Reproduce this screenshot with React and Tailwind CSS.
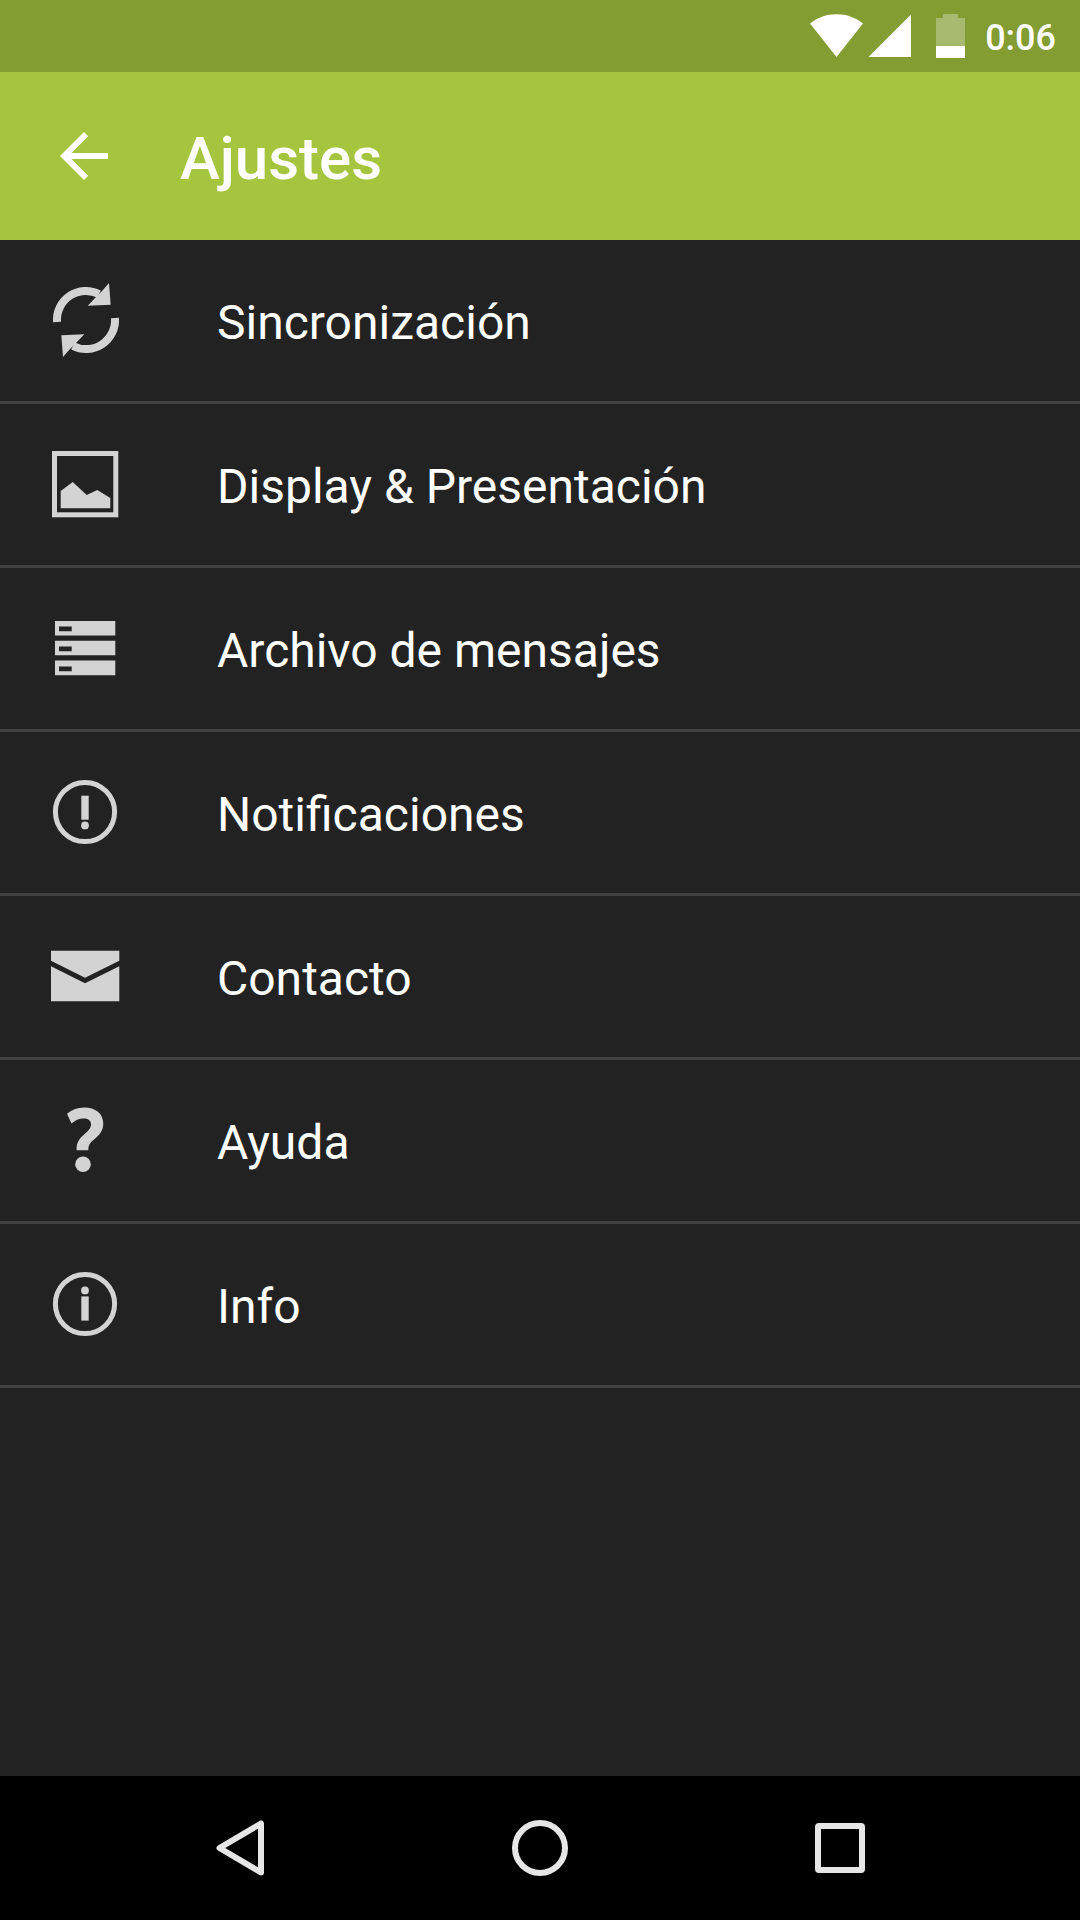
const SyncIcon = () => (
  <>
    <path d="M12 42A29 29 0 0 1 54 14" fill="none" stroke="currentColor" strokeWidth="8" />
    <path d="M64 3L65.7 24.7L42.7 25.7L51 17L57 11Z" />
    <g transform="rotate(180 41 40)">
      <path d="M12 42A29 29 0 0 1 54 14" fill="none" stroke="currentColor" strokeWidth="8" />
      <path d="M64 3L65.7 24.7L42.7 25.7L51 17L57 11Z" />
    </g>
  </>
);

const PictureIcon = () => (
  <>
    <rect x="9.5" y="9.5" width="61.3" height="61.3" fill="none" stroke="currentColor" strokeWidth="5" />
    <path d="M15.7 47L27.7 38L41.7 51L52.3 46L65.3 54V64.3H15.7Z" />
  </>
);

const ArchiveIcon = () => (
  <path
    fillRule="evenodd"
    d="M10 13H70.3V27.5H10ZM14 18.5H26.7V23.3H14Z M10 32.7H70.3V47.3H10ZM14 38.5H26.7V43.3H14Z M10 52.5H70.3V67.3H10ZM14 58.5H26.7V63.3H14Z"
  />
);

const AlertIcon = () => (
  <>
    <circle cx="40" cy="40" r="29.6" fill="none" stroke="currentColor" strokeWidth="5" />
    <rect x="36.3" y="23.7" width="7.4" height="24" />
    <circle cx="40" cy="53.4" r="3.9" />
  </>
);

const MailIcon = () => (
  <path d="M6 14.7H74.3V24.7L40 41.7L6 24.7ZM6 30.2L40 47.2L74.3 30.2V65.3H6Z" />
);

const HelpIcon = () => (
  <>
    <path d="M22 13.7C27 9.5 33 7.5 39 7.5C50.5 7.5 58.3 13.5 58.3 23.8C58.3 31 54 35.5 49 39.5C45 42.7 43.3 45 43.3 50.3H31.7C31.2 44 33 40 38.5 35C43 31 46 28.5 46 24.3C46 20.5 43 18.6 38.5 18.6C34 18.6 30 20.6 26.5 23.5Z" />
    <circle cx="38" cy="64.3" r="7.8" />
  </>
);

const InfoIcon = () => (
  <>
    <circle cx="40" cy="40" r="29.6" fill="none" stroke="currentColor" strokeWidth="5" />
    <circle cx="40" cy="26.4" r="3.9" />
    <rect x="36.3" y="32.4" width="7.4" height="24.2" />
  </>
);

const items = [
  { id: 'sync', label: 'Sincronización', Icon: SyncIcon },
  { id: 'display', label: 'Display & Presentación', Icon: PictureIcon },
  { id: 'archive', label: 'Archivo de mensajes', Icon: ArchiveIcon },
  { id: 'notifications', label: 'Notificaciones', Icon: AlertIcon },
  { id: 'contact', label: 'Contacto', Icon: MailIcon },
  { id: 'help', label: 'Ayuda', Icon: HelpIcon },
  { id: 'info', label: 'Info', Icon: InfoIcon },
];

const StatusBar = () => (
  <div className="flex h-[72px] items-center justify-end bg-[#839d32] pr-6 text-white">
    <svg className="h-[72px] w-[156px]" viewBox="0 0 156 72" fill="currentColor" aria-hidden="true">
      <path d="M1 23.5C8.5 17.5 17 14.2 27.5 14.2S46.5 17.5 54 23.5L27.5 57Z" />
      <path d="M102 14.5V57H59.5Z" />
      <path d="M134 14H149V18H156V46H127V18H134Z" fillOpacity="0.3" />
      <path d="M127 46H156V58H127Z" />
    </svg>
    <span className="ml-5 pt-1 text-[36px] leading-[44px] font-medium">0:06</span>
  </div>
);

const AppBar = () => (
  <header className="flex h-[168px] items-center gap-[60px] bg-[#a5c53f] px-12 text-white">
    <button type="button" aria-label="Atrás">
      <svg className="size-[72px]" viewBox="0 0 24 24" fill="currentColor" aria-hidden="true">
        <path d="M20 11H7.83l5.59-5.59L12 4l-8 8 8 8 1.41-1.41L7.83 13H20v-2z" />
      </svg>
    </button>
    <h1 className="pt-[6px] text-[60px] leading-[72px] font-medium">Ajustes</h1>
  </header>
);

const NavBar = () => (
  <nav className="flex h-36 items-center bg-black px-[90px] text-[#e6e6e6]">
    <button type="button" aria-label="Volver" className="flex flex-1 justify-center">
      <svg className="size-[72px]" viewBox="0 0 72 72" fill="none" stroke="currentColor" strokeWidth="6" strokeLinejoin="round" aria-hidden="true">
        <path d="M57 11.5V60.5L15.5 36Z" />
      </svg>
    </button>
    <button type="button" aria-label="Inicio" className="flex flex-1 justify-center">
      <svg className="size-[72px]" viewBox="0 0 72 72" fill="none" stroke="currentColor" strokeWidth="6" aria-hidden="true">
        <circle cx="36" cy="36" r="25" />
      </svg>
    </button>
    <button type="button" aria-label="Recientes" className="flex flex-1 justify-center">
      <svg className="size-[72px]" viewBox="0 0 72 72" fill="currentColor" fillRule="evenodd" aria-hidden="true">
        <path d="M15 11H57A4 4 0 0 1 61 15V57A4 4 0 0 1 57 61H15A4 4 0 0 1 11 57V15A4 4 0 0 1 15 11ZM17 17V55H55V17Z" />
      </svg>
    </button>
  </nav>
);

const App = () => {
  return (
    <div className="flex min-h-screen flex-col bg-[#222222] font-['Roboto',sans-serif]">
      <StatusBar />
      <AppBar />
      <main className="flex-1">
        <ul>
          {items.map(({ id, label, Icon }) => (
            <li key={id} className="border-b-3 border-[#404040]">
              <a href={`#${id}`} className="flex items-center gap-[92px] py-10 pr-6 pl-[45px]">
                <svg className="h-[81px] w-20 shrink-0 text-[#d3d3d3]" viewBox="0 0 80 81" fill="currentColor" aria-hidden="true">
                  <Icon />
                </svg>
                <span className="pt-1 text-[48px] leading-[56px] text-white">{label}</span>
              </a>
            </li>
          ))}
        </ul>
      </main>
      <NavBar />
    </div>
  );
};

export default App;
